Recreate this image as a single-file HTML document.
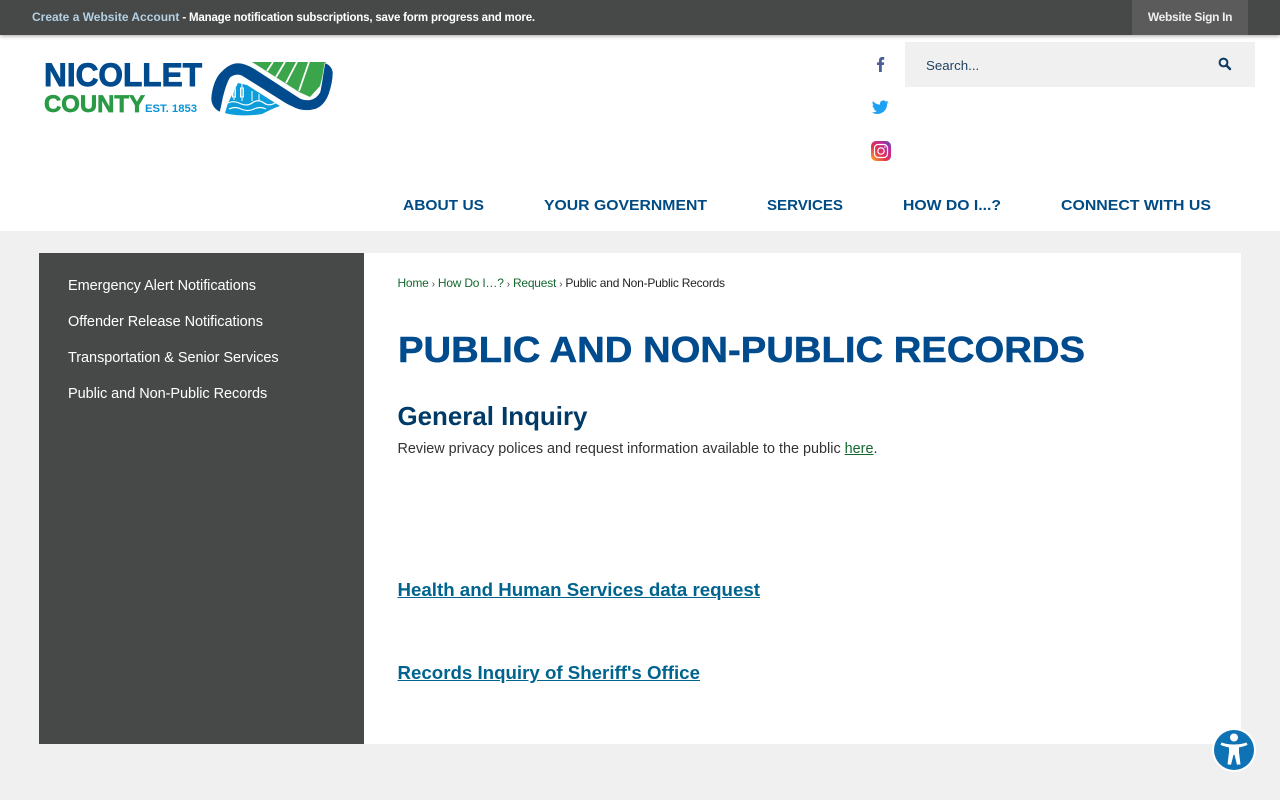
<!DOCTYPE html>
<html lang="en"><head><meta charset="utf-8"><title>Public and Non-Public Records</title>
<style>
html,body{margin:0;padding:0;width:1280px;height:800px;overflow:hidden;background:#f0f0f0;font-family:"Liberation Sans",Arial,sans-serif}
.a{position:absolute;white-space:nowrap}
#top{left:0;top:0;width:1280px;height:35px;background:#474948;box-shadow:0 1px 4px rgba(0,0,0,.35);z-index:3}
#white{left:0;top:35px;width:1280px;height:196px;background:#fff}
#signin{left:1132px;top:0;width:116px;height:35px;background:#5a5b5a;color:#eee;font-size:12px;font-weight:bold;line-height:35px;text-align:center;letter-spacing:-.33px}
#msg{left:32px;top:0;line-height:35px;font-size:11.5px;font-weight:bold;color:#fff;letter-spacing:-.19px}
#msg span{color:#b3cfe3;font-size:12px;letter-spacing:0}
#search{left:905px;top:42px;width:350px;height:45px;background:#f0f0f0}
#search div{position:absolute;left:21px;top:0;line-height:47px;font-size:13.3px;color:#1f3f5f}
#side{left:39px;top:253px;width:325px;height:491px;background:#474948}
#main{left:364px;top:253px;width:877px;height:491px;background:#fff}
.s{left:68px;color:#fff;font-size:14.5px;line-height:20px;letter-spacing:-.05px}
#crumb{left:397.5px;top:275px;font-size:12px;line-height:16px;color:#222;letter-spacing:-.23px}
#crumb b{font-weight:normal;color:#14682f}
#crumb i{font-style:normal;font-size:10px;color:#444}
h2{margin:0;left:397.5px;top:402px;font-size:25.9px;line-height:30px;color:#003a66}
#p{left:397.5px;top:439.500px;font-size:14.4px;line-height:18px;color:#333}
#p a{color:#14682f;text-decoration:underline}
.l{left:397.5px;font-size:18.7px;font-weight:bold;color:#00648f;text-decoration:underline;line-height:24px}
svg{position:absolute;overflow:visible}
svg text{font-family:"Liberation Sans",Arial,sans-serif;font-weight:bold}
</style></head><body>
<div class="a" id="white"></div>
<div class="a" id="top"></div>
<div class="a" id="msg" style="z-index:4"><span>Create a Website Account</span> - Manage notification subscriptions, save form progress and more.</div>
<div class="a" id="signin" style="z-index:4">Website Sign In</div>

<!-- logo -->
<svg style="left:0;top:0" width="400" height="130">
<text x="44" y="86" font-size="32" fill="#004b8d" stroke="#004b8d" stroke-width=".9" textLength="158" lengthAdjust="spacingAndGlyphs">NICOLLET</text>
<text x="44" y="112" font-size="24" fill="#2a9a45" stroke="#2a9a45" stroke-width=".7" textLength="101" lengthAdjust="spacingAndGlyphs">COUNTY</text>
<text x="145" y="112" font-size="11" fill="#0a94d6" textLength="52" lengthAdjust="spacingAndGlyphs">EST. 1853</text>
<path d="M252 62H326L320 86 310 97 299 92z" fill="#3aa54a"/>
<g stroke="#fff" stroke-width="1.800"><path d="M273 62l-6 9M285 62l-9 15M297 62l-11 21M309 62l-10 29"/></g>
<path d="M238 83L247 85 280 106C274 108 270 110 262 114 250 116 235 116 225 113L228 103z" fill="#0d9ddb"/>
<path d="M211 98C212 86 216 76 222 71 228 65 233 63 238 63 244 63 250 66 255 69L298 97C302 100 306 100 309 100 315 99 318 96 320 92 322 84 323 72 325 63 329 64 333 68 333 73 333 80 331 88 329 94 326 102 321 107 316 109 309 111 302 111 295 108 291 106 288 105 285 103L242 76C238 74 233 75 230 78 227 83 225 90 223 98 222 103 221 108 220 112 215 110 211 105 211 98z" fill="#004b8d" stroke="#fff" stroke-width=".6"/>
<path d="M226 104c5-3 9-3 13-1s9 3 13 0 8-3 12 0 8 2 13-1M229 109c5-2 8-2 12 0s9 2 13 0 8-2 12 0" fill="none" stroke="#fff" stroke-width="1.200"/>
<g stroke="#fff" stroke-width="1" fill="none"><path d="M234 85v15M242 84v17M252 91v10M259 94v7"/><rect x="232.500" y="89" width="3" height="8"/><rect x="240.500" y="88" width="3" height="9"/></g>
</svg>

<!-- social -->
<svg style="left:870px;top:55px" width="24" height="110">
<path d="M9 17V10H7V7.400h2V5.400C9 3.200 10.200 2 12.200 2h2v2.800h-1.300c-.8 0-1.100.4-1.100 1v1.600h2.400L13.800 10h-2v7z" fill="#4a5f95"/>
<path d="M18.500 47c-.6.300-1.300.4-2 .5.700-.4 1.300-1 1.500-1.800-.7.400-1.400.6-2.200.8a3.400 3.400 0 0 0-5.800 3.100c-2.800-.1-5.300-1.500-7-3.500-.9 1.500-.4 3.500 1 4.500-.5 0-1-.2-1.500-.4 0 1.600 1.100 3 2.700 3.400-.5.100-1 .1-1.500 0 .4 1.300 1.700 2.300 3.200 2.400A7 7 0 0 1 2 57.500c1.600 1 3.300 1.500 5.300 1.500 6.400 0 10-5.400 9.800-10.200.6-.5 1-1.100 1.400-1.800z" fill="#1da1f2"/>
<defs><linearGradient id="ig" x1="0" y1="1" x2="1" y2="0"><stop offset="0" stop-color="#fdb32b"/><stop offset=".4" stop-color="#e5304f"/><stop offset=".75" stop-color="#b82c9c"/><stop offset="1" stop-color="#4a4fb5"/></linearGradient></defs>
<rect x="1" y="86" width="20" height="20" rx="5" fill="url(#ig)"/>
<rect x="4.500" y="89.500" width="13" height="13" rx="3.500" fill="none" stroke="#fff" stroke-width="1.200"/>
<circle cx="11" cy="96" r="3.200" fill="none" stroke="#fff" stroke-width="1.200"/><circle cx="15" cy="92" r=".8" fill="#fff"/>
</svg>

<div class="a" id="search"><div>Search...</div>
<svg style="left:313px;top:15px" width="14" height="14"><circle cx="5.500" cy="5.500" r="3.900" fill="none" stroke="#0e3a62" stroke-width="2"/><path d="M8.500 8.500l3.500 3.500" stroke="#0e3a62" stroke-width="2.400" stroke-linecap="round"/></svg>
</div>

<!-- nav -->
<svg style="left:0;top:0" width="1280" height="231">
<g font-size="15" fill="#004b84">
<text x="403" y="210" textLength="81" lengthAdjust="spacingAndGlyphs">ABOUT US</text>
<text x="544" y="210" textLength="163" lengthAdjust="spacingAndGlyphs">YOUR GOVERNMENT</text>
<text x="767" y="210" textLength="76" lengthAdjust="spacingAndGlyphs">SERVICES</text>
<text x="903" y="210" textLength="98" lengthAdjust="spacingAndGlyphs">HOW DO I...?</text>
<text x="1061" y="210" textLength="150" lengthAdjust="spacingAndGlyphs">CONNECT WITH US</text>
</g></svg>

<div class="a" id="side"></div>
<div class="a" id="main"></div>
<div class="a s" style="top:276px">Emergency Alert Notifications</div>
<div class="a s" style="top:312px">Offender Release Notifications</div>
<div class="a s" style="top:348px">Transportation &amp; Senior Services</div>
<div class="a s" style="top:384px">Public and Non-Public Records</div>

<div class="a" id="crumb"><b>Home</b> <i>›</i> <b>How Do I…?</b> <i>›</i> <b>Request</b> <i>›</i> Public and Non-Public Records</div>

<svg style="left:0;top:0" width="1280" height="400">
<text x="398" y="362" font-size="36" fill="#004b8d" textLength="687" lengthAdjust="spacingAndGlyphs" stroke="#004b8d" stroke-width=".5">PUBLIC AND NON-PUBLIC RECORDS</text>
</svg>

<h2 class="a">General Inquiry</h2>
<div class="a" id="p">Review privacy polices and request information available to the public <a>here</a>.</div>
<div class="a l" style="top:578px">Health and Human Services data request</div>
<div class="a l" style="top:661px">Records Inquiry of Sheriff's Office</div>

<!-- accessibility -->
<svg style="left:1212px;top:728px" width="44" height="44">
<circle cx="22" cy="22" r="22" fill="#fff"/><circle cx="22" cy="22" r="20" fill="#0f72b5"/>
<circle cx="22" cy="9.500" r="4" fill="#fff"/>
<path d="M9.500 14.500C14 16 18 16.500 22 16.500s8-.5 12.500-2l1 2.400c-3 1.200-5.500 2-8.500 2.500v5l1.500 12-3.500.4-2.500-10h-1l-2.500 10-3.500-.4 1.500-12v-5c-3-.5-5.500-1.300-8.500-2.500z" fill="#fff"/>
</svg>
</body></html>
